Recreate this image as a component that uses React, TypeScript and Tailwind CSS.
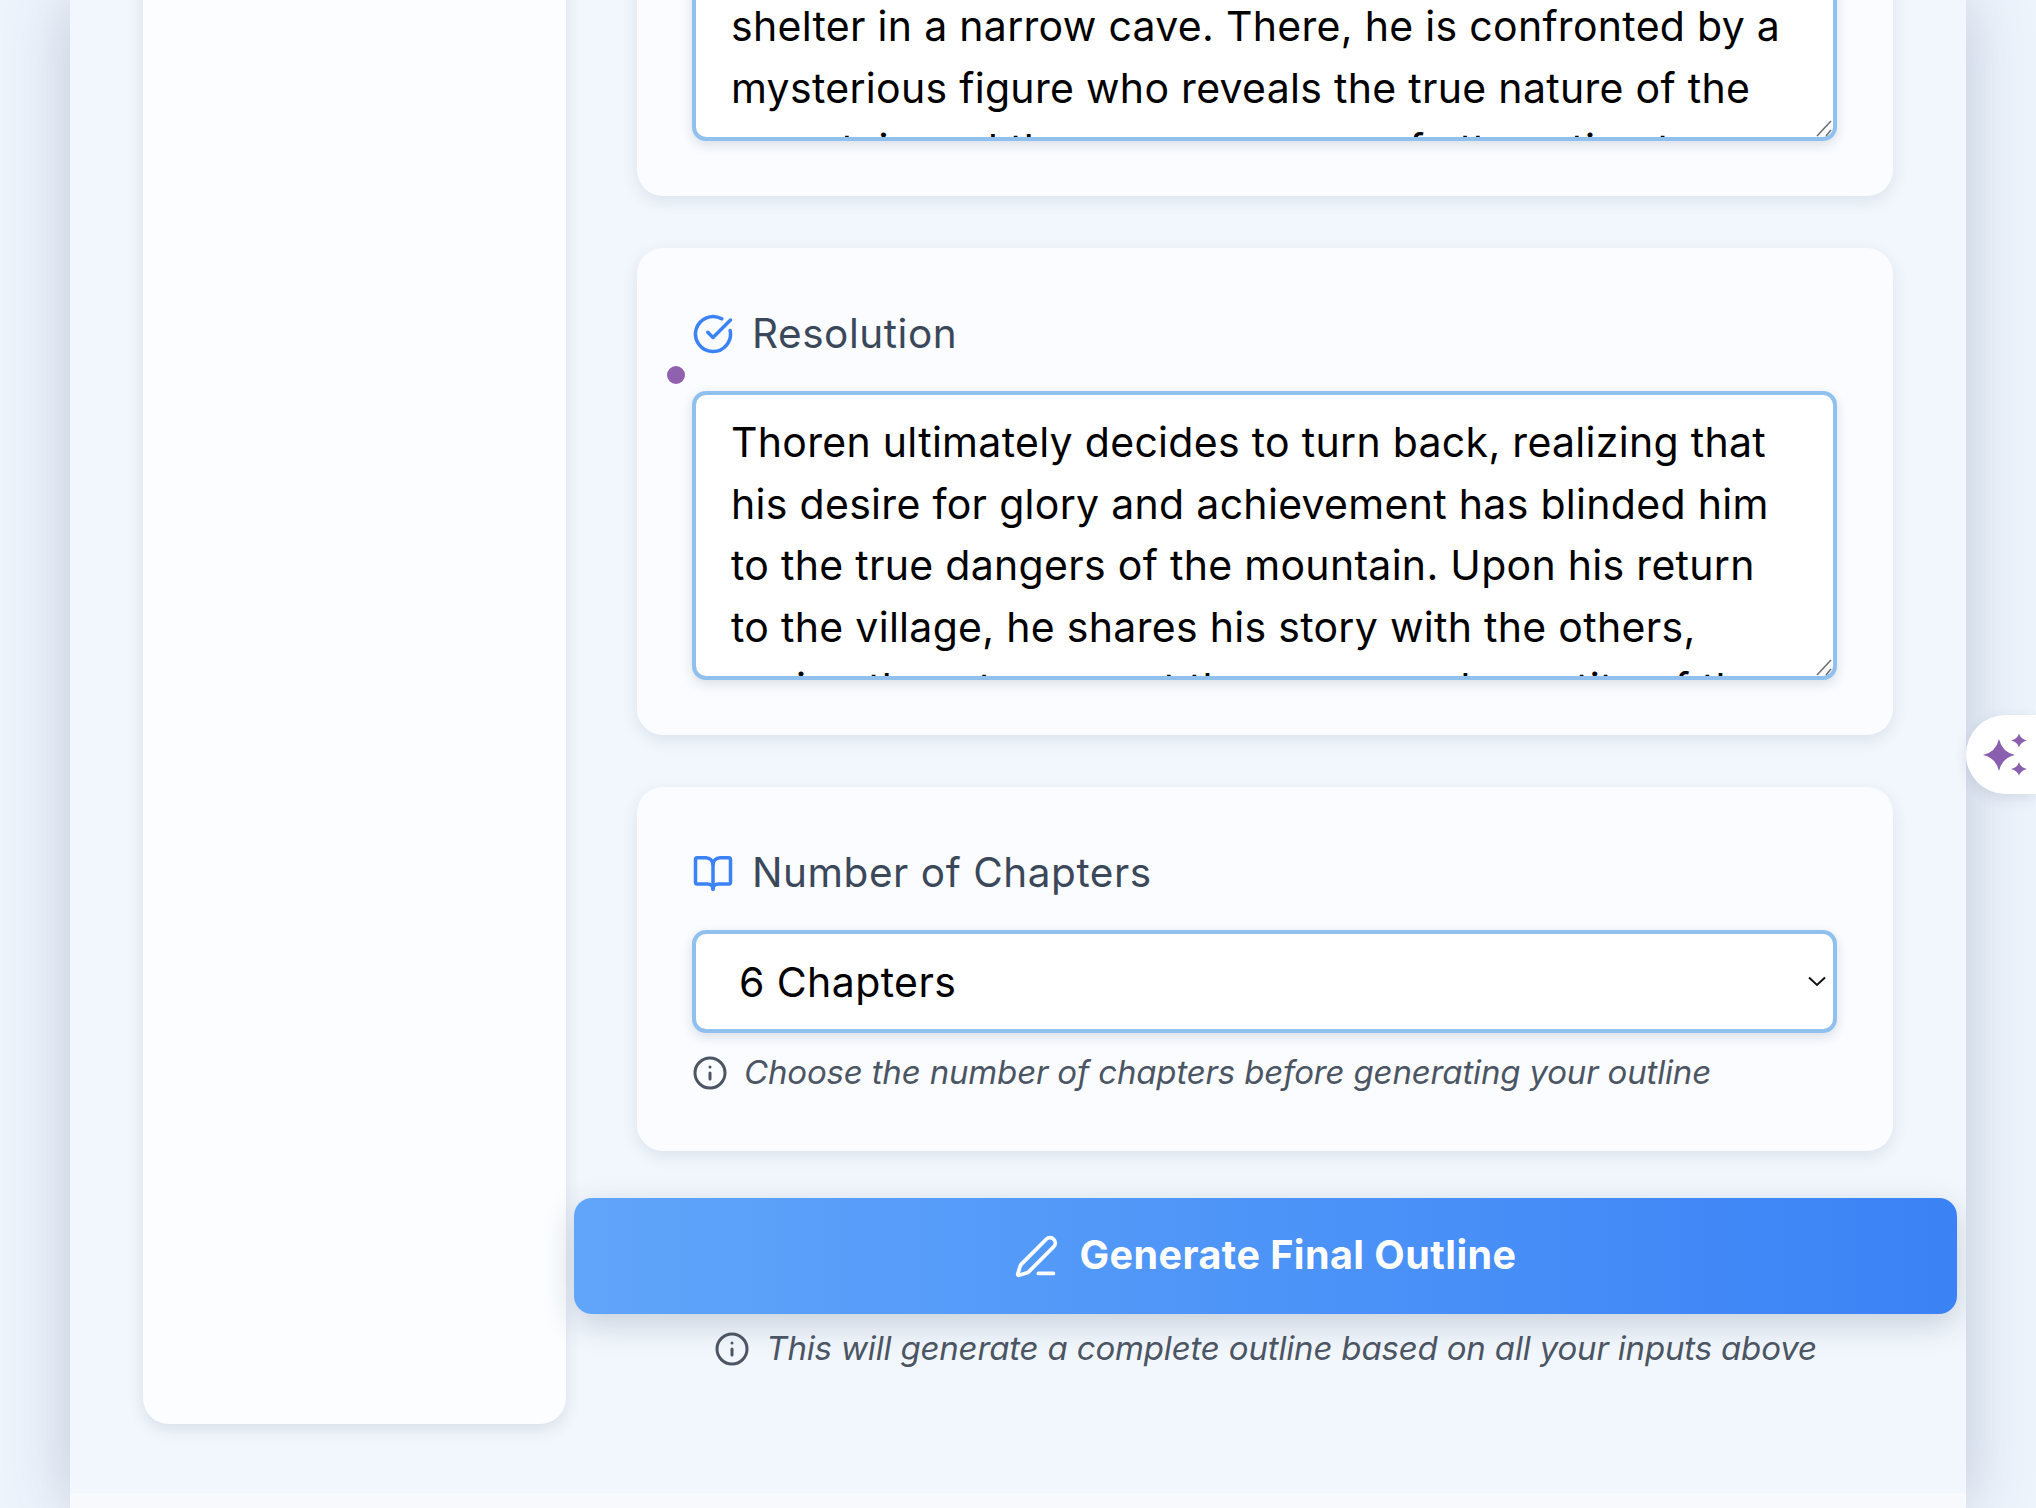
import { BookOpen, CircleCheckBig, Info, PenLine } from 'lucide-react';

const fontStack = '[font-family:Inter,"Noto_Sans",sans-serif]';

const climaxText =
  'As the storm closes in on the upper slopes, Thoren\nloses his footing and is swept away, forced to take\nshelter in a narrow cave. There, he is confronted by a\nmysterious figure who reveals the true nature of the\nmountain and the consequences of attempting to\nreach its summit.';

const resolutionText =
  'Thoren ultimately decides to turn back, realizing that\nhis desire for glory and achievement has blinded him\nto the true dangers of the mountain. Upon his return\nto the village, he shares his story with the others,\nurging them to respect the power and sanctity of the\nmountain for generations to come.';

function Card({ children }: { children: React.ReactNode }) {
  return (
    <section className="relative rounded-[26px] bg-[#fafcff] pt-[56px] pr-[56px] pb-[55px] pl-[55px] shadow-[0_5px_16px_rgba(30,50,80,0.10)]">
      {children}
    </section>
  );
}

function Label({ icon, text }: { icon: React.ReactNode; text: string }) {
  return (
    <div className="mb-[31px] flex h-[56px] items-center gap-[18px] pt-[4px]">
      <span className="flex w-[42px] shrink-0 justify-center text-[#3b82f6]">{icon}</span>
      <span className="text-[40.5px] font-[430] tracking-[0.55px] text-[#3a4859]">{text}</span>
    </div>
  );
}

function StoryField({ value }: { value: string }) {
  return (
    <div className="relative">
      <textarea
        readOnly
        value={value}
        className="block h-[289px] w-full resize-none overflow-hidden rounded-[14px] border-[4px] border-[#90c1ee] bg-white px-[35px] py-[17px] text-[41px] leading-[61.6px] font-[420] tracking-[0.3px] text-black shadow-[0_4px_12px_rgba(30,50,80,0.14)] outline-none"
      />
      {/* resize grip */}
      <svg className="absolute right-[5px] bottom-[3px]" width="16" height="18" viewBox="0 0 16 18" stroke="#6b6b6b" strokeWidth="1.5" fill="none">
        <path d="M1 16 L15 1" />
        <path d="M10 16 L15 10" />
      </svg>
    </div>
  );
}

function Hint({ text, className }: { text: string; className: string }) {
  return (
    <div className={`flex items-center gap-[16px] ${className}`}>
      <Info size={36} strokeWidth={2} className="mt-[2px] shrink-0 text-[#4b5563]" />
      <span className="text-[33px] leading-[44px] tracking-[-0.17px] italic text-[#4b5563]">{text}</span>
    </div>
  );
}

function SparkleBadge() {
  return (
    <div className="absolute top-[715px] right-0 flex h-[79px] w-[70px] items-center rounded-l-[40px] bg-white pl-[17px] shadow-[0_4px_14px_rgba(30,50,80,0.12)]">
      <svg width="46" height="48" viewBox="0 0 46 48" fill="#8a5fb0">
        <path d="M16 8 Q19 21 32 24 Q19 27 16 40 Q13 27 0 24 Q13 21 16 8Z" />
        <path d="M36 2.500 Q37.500 8 44 9.500 Q37.500 11 36 16.500 Q34.500 11 28 9.500 Q34.500 8 36 2.500Z" />
        <path d="M36 31 Q37.500 36.500 44 38 Q37.500 39.500 36 45 Q34.500 39.500 28 38 Q34.500 36.500 36 31Z" />
      </svg>
    </div>
  );
}

export default function App() {
  return (
    <div className={`relative h-[1508px] overflow-hidden bg-[#eef4fc] px-[70px] ${fontStack}`}>
      <main className="flex h-full flex-col overflow-hidden bg-[#f2f7fd] shadow-[0_0_60px_rgba(60,85,125,0.28)]">
        <div className="mt-[-291px] flex pr-[9px] pl-[73px]">
          <aside className="w-[423px] shrink-0 rounded-[26px] bg-[#fbfdff] shadow-[0_5px_16px_rgba(30,50,80,0.12)]" />

          <div className="ml-[8px] flex-1 pb-[54px]">
            <div className="flex flex-col gap-[52px] pr-[64px] pl-[63px]">
              <Card>
                <Label icon={<CircleCheckBig size={44} strokeWidth={2} />} text="Climax" />
                <StoryField value={climaxText} />
              </Card>

              <Card>
                <span className="absolute top-[118px] left-[30px] h-[18px] w-[18px] rounded-full bg-[#9061ae]" />
                <Label icon={<CircleCheckBig size={44} strokeWidth={2} />} text="Resolution" />
                <StoryField value={resolutionText} />
              </Card>

              <Card>
                <Label icon={<BookOpen size={47} strokeWidth={2} />} text="Number of Chapters" />
                <div className="relative">
                  <select
                    defaultValue="6"
                    className="block h-[103px] w-full appearance-none rounded-[14px] border-[4px] border-[#90c1ee] bg-white pt-[2px] pl-[43px] text-[41px] font-[420] tracking-[0.4px] text-black shadow-[0_4px_12px_rgba(30,50,80,0.14)] outline-none"
                  >
                    <option value="4">4 Chapters</option>
                    <option value="6">6 Chapters</option>
                    <option value="8">8 Chapters</option>
                  </select>
                  <svg className="pointer-events-none absolute top-[46px] right-[11px]" width="18" height="11" viewBox="0 0 18 11" fill="none" stroke="#111" strokeWidth="2">
                    <path d="M1 1.500 L9 9 L17 1.500" />
                  </svg>
                </div>
                <Hint
                  text="Choose the number of chapters before generating your outline"
                  className="mt-[17px] mb-[2px]"
                />
              </Card>
            </div>

            <button className="mt-[47px] flex h-[116px] w-full items-center justify-center gap-[20px] rounded-[18px] bg-gradient-to-r from-[#60a5fa] to-[#3b82f6] text-[39.5px] font-bold tracking-[0.45px] text-white shadow-[0_10px_32px_rgba(30,50,80,0.2)]">
              <PenLine size={45} strokeWidth={2} />
              Generate Final Outline
            </button>

            <Hint
              text="This will generate a complete outline based on all your inputs above"
              className="mt-[12px] justify-center"
            />
          </div>
        </div>
        <div className="flex-1" />
        <div className="h-[15px] bg-[#f7f9fc]" />
      </main>
      <SparkleBadge />
    </div>
  );
}
